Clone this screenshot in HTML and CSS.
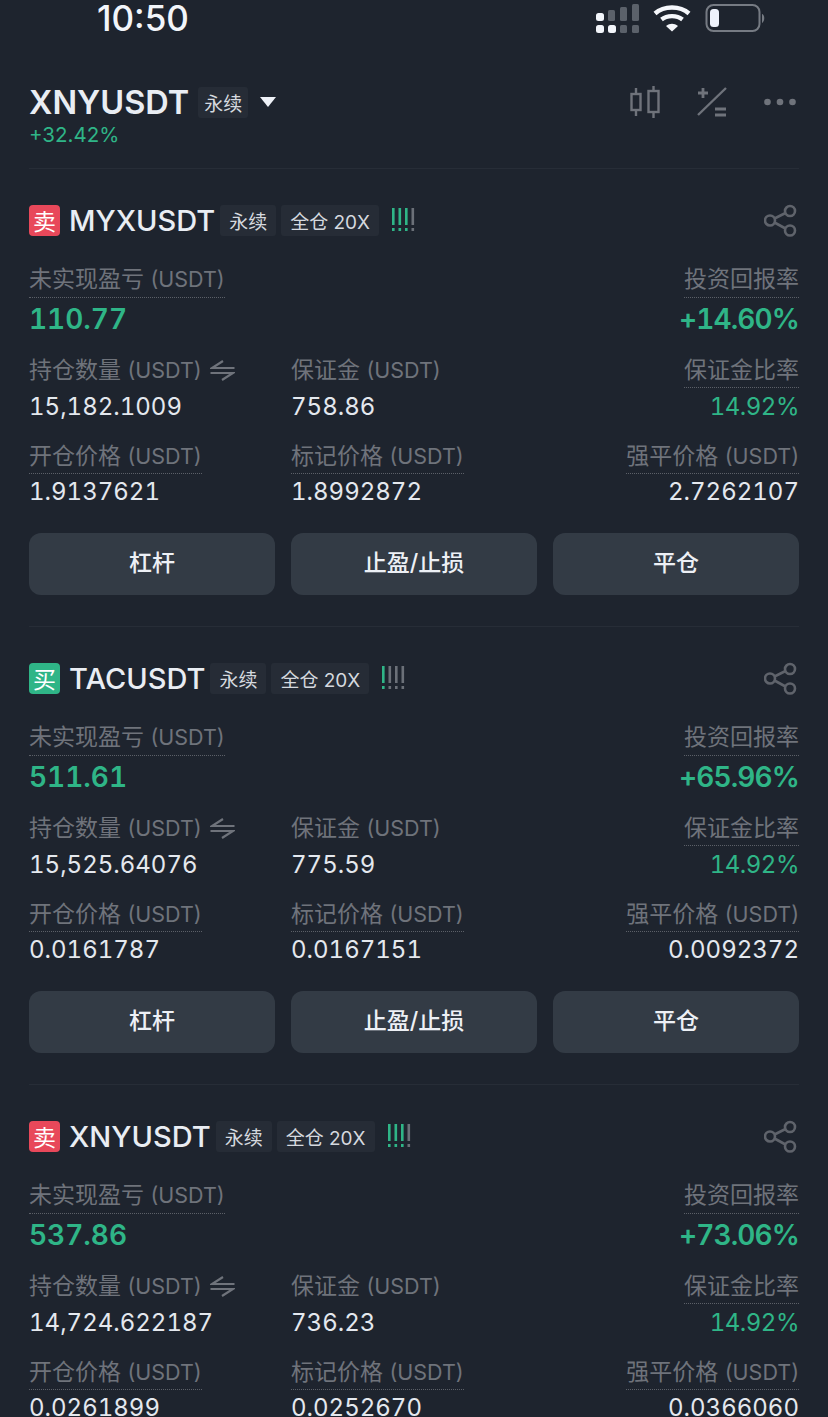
FILE: index.html
```html
<!DOCTYPE html>
<html lang="zh-CN">
<head>
    <meta charset="UTF-8">
    <meta name="viewport" content="width=device-width, initial-scale=1.0">
    <title>XNYUSDT</title>
    <link rel="stylesheet" href="styles.css">
</head>
<body>
    <div class="statusbar">
        <span class="time">10:50</span>
        <div class="status-icons">
            <svg class="signal" width="43" height="32" viewBox="0 0 43 32">
                <rect x="0" y="11" width="8" height="8" rx="2.500" fill="#f2f5fa"/>
                <rect x="12" y="8" width="7" height="11" rx="1.500" fill="#5b616a"/>
                <rect x="24" y="5" width="7" height="14" rx="1.500" fill="#5b616a"/>
                <rect x="36" y="2" width="7" height="17" rx="1.500" fill="#5b616a"/>
                <rect x="0" y="23" width="8" height="8" rx="2.500" fill="#f2f5fa"/>
                <rect x="12" y="23" width="8" height="8" rx="2.500" fill="#f2f5fa"/>
                <rect x="24" y="23" width="7" height="8" rx="1.500" fill="#5b616a"/>
                <rect x="36" y="23" width="7" height="8" rx="1.500" fill="#5b616a"/>
            </svg>
            <svg class="wifi" width="38" height="28" viewBox="0 0 38 28">
                <path d="M2 9.500 C11 1.500 27 1.500 36 9.500" fill="none" stroke="#f5f7fb" stroke-width="4.400"/>
                <path d="M8.500 15.500 C14 11 24 11 29.500 15.500" fill="none" stroke="#f5f7fb" stroke-width="4.200"/>
                <path d="M13 22 L19 27.500 L25 22 C21 19 17 19 13 22 Z" fill="#f5f7fb"/>
            </svg>
            <svg class="battery" width="62" height="30" viewBox="0 0 62 30">
                <rect x="1.500" y="2" width="53" height="26" rx="7" fill="none" stroke="#767b83" stroke-width="2"/>
                <rect x="5" y="6" width="9" height="18" rx="3.500" fill="#eef2fb"/>
                <path d="M57 11 C60 12 60 18 57 20 Z" fill="#767b83"/>
            </svg>
        </div>
    </div>

    <header class="top">
        <div class="top-left">
            <div class="top-title">
                <h1>XNYUSDT</h1>
                <span class="tag">永续</span>
                <svg class="caret" width="18" height="12" viewBox="0 0 18 12"><path d="M1 1 H17 L9 11 Z" fill="#eef1f7"/></svg>
            </div>
            <div class="top-change">+32.42%</div>
        </div>
        <div class="top-icons">
            <svg width="30" height="32" viewBox="0 0 30 32" fill="none" stroke="#6f737b" stroke-width="2.400">
                <rect x="1.500" y="8" width="9" height="16"/>
                <path d="M6 2 V8 M6 24 V30"/>
                <rect x="18.500" y="5" width="10" height="21"/>
                <path d="M23.500 0 V5 M23.500 26 V32"/>
            </svg>
            <svg width="30" height="30" viewBox="0 0 30 30" fill="none" stroke="#6f737b" stroke-width="2.400">
                <path d="M1 28 L29 1"/>
                <path d="M1 6 H11 M6 1 V11" stroke-width="2.800"/>
                <path d="M18 22 H29 M18 28 H29" stroke-width="2.800"/>
            </svg>
            <svg width="32" height="8" viewBox="0 0 32 8" fill="#6f737b">
                <circle cx="3.500" cy="4" r="3.300"/><circle cx="16" cy="4" r="3.300"/><circle cx="28.500" cy="4" r="3.300"/>
            </svg>
        </div>
    </header>

    <main class="positions">
        <section class="position">
            <div class="pos-head">
                <span class="side sell">卖</span>
                <h2>MYXUSDT</h2>
                <span class="tag">永续</span>
                <span class="tag">全仓 20X</span>
                <svg class="bars" width="24" height="24" viewBox="0 0 24 24"><use href="#ticks3"/></svg>
                <svg class="share" width="33" height="33" viewBox="0 0 33 33"><use href="#share"/></svg>
            </div>
            <div class="row row-main">
                <div class="cell">
                    <span class="label dotted">未实现盈亏 <span class="unit">(USDT)</span></span>
                    <span class="value big up">110.77</span>
                </div>
                <div class="cell cell-end">
                    <span class="label dotted">投资回报率</span>
                    <span class="value big up">+14.60%</span>
                </div>
            </div>
            <div class="row row-mid">
                <div class="cell">
                    <span class="label">持仓数量 <span class="unit">(USDT)</span><svg class="swap" width="25" height="21" viewBox="0 0 25 21"><use href="#swap"/></svg></span>
                    <span class="value">15,182.1009</span>
                </div>
                <div class="cell">
                    <span class="label">保证金 <span class="unit">(USDT)</span></span>
                    <span class="value">758.86</span>
                </div>
                <div class="cell cell-end">
                    <span class="label dotted">保证金比率</span>
                    <span class="value up">14.92%</span>
                </div>
            </div>
            <div class="row row-low">
                <div class="cell">
                    <span class="label dotted">开仓价格 <span class="unit">(USDT)</span></span>
                    <span class="value">1.9137621</span>
                </div>
                <div class="cell">
                    <span class="label dotted">标记价格 <span class="unit">(USDT)</span></span>
                    <span class="value">1.8992872</span>
                </div>
                <div class="cell cell-end">
                    <span class="label dotted">强平价格 <span class="unit">(USDT)</span></span>
                    <span class="value">2.7262107</span>
                </div>
            </div>
            <div class="actions">
                <button>杠杆</button>
                <button>止盈/止损</button>
                <button>平仓</button>
            </div>
        </section>

        <section class="position">
            <div class="pos-head">
                <span class="side buy">买</span>
                <h2>TACUSDT</h2>
                <span class="tag">永续</span>
                <span class="tag">全仓 20X</span>
                <svg class="bars" width="24" height="24" viewBox="0 0 24 24"><use href="#ticks1"/></svg>
                <svg class="share" width="33" height="33" viewBox="0 0 33 33"><use href="#share"/></svg>
            </div>
            <div class="row row-main">
                <div class="cell">
                    <span class="label dotted">未实现盈亏 <span class="unit">(USDT)</span></span>
                    <span class="value big up">511.61</span>
                </div>
                <div class="cell cell-end">
                    <span class="label dotted">投资回报率</span>
                    <span class="value big up">+65.96%</span>
                </div>
            </div>
            <div class="row row-mid">
                <div class="cell">
                    <span class="label">持仓数量 <span class="unit">(USDT)</span><svg class="swap" width="25" height="21" viewBox="0 0 25 21"><use href="#swap"/></svg></span>
                    <span class="value">15,525.64076</span>
                </div>
                <div class="cell">
                    <span class="label">保证金 <span class="unit">(USDT)</span></span>
                    <span class="value">775.59</span>
                </div>
                <div class="cell cell-end">
                    <span class="label dotted">保证金比率</span>
                    <span class="value up">14.92%</span>
                </div>
            </div>
            <div class="row row-low">
                <div class="cell">
                    <span class="label dotted">开仓价格 <span class="unit">(USDT)</span></span>
                    <span class="value">0.0161787</span>
                </div>
                <div class="cell">
                    <span class="label dotted">标记价格 <span class="unit">(USDT)</span></span>
                    <span class="value">0.0167151</span>
                </div>
                <div class="cell cell-end">
                    <span class="label dotted">强平价格 <span class="unit">(USDT)</span></span>
                    <span class="value">0.0092372</span>
                </div>
            </div>
            <div class="actions">
                <button>杠杆</button>
                <button>止盈/止损</button>
                <button>平仓</button>
            </div>
        </section>

        <section class="position">
            <div class="pos-head">
                <span class="side sell">卖</span>
                <h2>XNYUSDT</h2>
                <span class="tag">永续</span>
                <span class="tag">全仓 20X</span>
                <svg class="bars" width="24" height="24" viewBox="0 0 24 24"><use href="#ticks3"/></svg>
                <svg class="share" width="33" height="33" viewBox="0 0 33 33"><use href="#share"/></svg>
            </div>
            <div class="row row-main">
                <div class="cell">
                    <span class="label dotted">未实现盈亏 <span class="unit">(USDT)</span></span>
                    <span class="value big up">537.86</span>
                </div>
                <div class="cell cell-end">
                    <span class="label dotted">投资回报率</span>
                    <span class="value big up">+73.06%</span>
                </div>
            </div>
            <div class="row row-mid">
                <div class="cell">
                    <span class="label">持仓数量 <span class="unit">(USDT)</span><svg class="swap" width="25" height="21" viewBox="0 0 25 21"><use href="#swap"/></svg></span>
                    <span class="value">14,724.622187</span>
                </div>
                <div class="cell">
                    <span class="label">保证金 <span class="unit">(USDT)</span></span>
                    <span class="value">736.23</span>
                </div>
                <div class="cell cell-end">
                    <span class="label dotted">保证金比率</span>
                    <span class="value up">14.92%</span>
                </div>
            </div>
            <div class="row row-low">
                <div class="cell">
                    <span class="label dotted">开仓价格 <span class="unit">(USDT)</span></span>
                    <span class="value">0.0261899</span>
                </div>
                <div class="cell">
                    <span class="label dotted">标记价格 <span class="unit">(USDT)</span></span>
                    <span class="value">0.0252670</span>
                </div>
                <div class="cell cell-end">
                    <span class="label dotted">强平价格 <span class="unit">(USDT)</span></span>
                    <span class="value">0.0366060</span>
                </div>
            </div>
        </section>
    </main>

    <!-- shared icons -->
    <svg class="defs" width="0" height="0">
        <defs>
            <g id="tick">
                <rect x="0" y="0" width="2.600" height="17"/>
                <rect x="0" y="20" width="2.600" height="3"/>
            </g>
            <g id="ticks3">
                <use href="#tick" x="1" fill="#2fb587"/>
                <use href="#tick" x="7.500" fill="#2fb587"/>
                <use href="#tick" x="14" fill="#2fb587"/>
                <use href="#tick" x="20.500" fill="#6b7078"/>
            </g>
            <g id="ticks1">
                <use href="#tick" x="1" fill="#2fb587"/>
                <use href="#tick" x="7.500" fill="#6b7078"/>
                <use href="#tick" x="14" fill="#6b7078"/>
                <use href="#tick" x="20.500" fill="#6b7078"/>
            </g>
            <g id="share" fill="none" stroke="#5f636b" stroke-width="2.600">
                <circle cx="26" cy="7" r="5"/>
                <circle cx="6" cy="16.500" r="5"/>
                <circle cx="26" cy="26.500" r="5"/>
                <path d="M10.500 14.500 L21.500 9 M10.500 18.500 L21.500 24.500"/>
            </g>
            <g id="swap" fill="none" stroke="#6f737b" stroke-width="2.200">
                <path d="M24.500 8 H2 L13 1"/>
                <path d="M0.500 13 H23 L12 20"/>
            </g>
        </defs>
    </svg>
</body>
</html>
```

FILE: styles.css
```css
* {
    box-sizing: border-box;
}
html, body {
    height: 100%;
}
body {
    margin: 0;
    padding: 0;
    background: #1e242e;
    color: #e9edf3;
    font-family: Inter, "Noto Sans CJK SC", sans-serif;
    overflow: hidden;
}
h1, h2 {
    margin: 0;
    font-weight: 600;
}
.defs {
    display: block;
}

/* status bar */
.statusbar {
    height: 35px;
    padding: 0 61px 0 97px;
    display: flex;
    justify-content: space-between;
    align-items: center;
}
.time {
    font-size: 35px;
    font-weight: 500;
    color: #f2f5fa;
}
.status-icons {
    display: flex;
    align-items: center;
    gap: 14px;
}

/* top bar */
.top {
    margin: 48px 29px 0;
    height: 86px;
    border-bottom: 1px solid #272d37;
    display: flex;
    justify-content: space-between;
}
.top-title {
    display: flex;
    align-items: center;
    height: 38px;
}
.top-title h1 {
    font-size: 32.500px;
}
.top-title .tag {
    margin-left: 9px;
    height: 31px;
    padding: 0 6px;
}
.caret {
    margin-left: 11px;
}
.top-change {
    font-size: 20.500px;
    color: #2fb587;
    line-height: 28px;
}
.top-icons {
    width: 169px;
    height: 38px;
    padding-right: 3px;
    display: flex;
    justify-content: space-between;
    align-items: center;
}

/* tags */
.tag {
    height: 31px;
    padding: 0 9px;
    background: #262c36;
    border-radius: 3px;
    font-size: 19px;
    color: #d5d9df;
    display: inline-flex;
    align-items: center;
}

/* position card */
.position {
    margin: 0 29px;
    height: 458px;
    padding-top: 34px;
    border-bottom: 1px solid #272d37;
}
.position:last-child {
    height: auto;
    border-bottom: 0;
}
.pos-head {
    height: 34px;
    display: flex;
    align-items: center;
}
.pos-head h2 {
    margin-left: 9px;
    font-size: 29px;
    font-weight: 500;
}
.pos-head .tag {
    margin-left: 5px;
}
.bars {
    margin-left: 12px;
}
.share {
    margin-left: auto;
    margin-right: 2px;
}
.side {
    width: 31px;
    height: 31px;
    border-radius: 4px;
    font-size: 23px;
    color: #fff;
    display: flex;
    justify-content: center;
    align-items: center;
}
.sell {
    background: #e8485a;
}
.buy {
    background: #2fb587;
}

/* data rows */
.row {
    display: flex;
}
.row-main {
    margin-top: 24px;
    justify-content: space-between;
}
.row-main .label {
    height: 37px;
}
.row-mid {
    margin-top: 11px;
}
.row-mid .value {
    margin-top: 1px;
}
.row-low {
    margin-top: 13px;
}
.cell {
    width: 262px;
    display: flex;
    flex-direction: column;
    align-items: flex-start;
}
.cell-end {
    margin-left: auto;
    width: auto;
    align-items: flex-end;
}
.label {
    font-size: 23px;
    line-height: 36px;
    height: 36px;
    color: #6f737b;
    display: flex;
    align-items: center;
    white-space: pre;
}
.unit {
    font-size: 21.500px;
}
.dotted {
    border-bottom: 1px dotted #5c6068;
}
.swap {
    margin-left: 8px;
}
.value {
    font-size: 24px;
    line-height: 36px;
    color: #e4e8ee;
    font-variant-numeric: tabular-nums;
}
.big {
    font-size: 28px;
    font-weight: 600;
    line-height: 43px;
}
.up {
    color: #2fb587;
}
.cell-end .up {
    letter-spacing: -0.500px;
}
.cell-end .big {
    letter-spacing: -0.900px;
}

/* buttons */
.actions {
    margin-top: 23px;
    display: flex;
    gap: 16px;
}
.actions button {
    flex: 1;
    height: 62px;
    padding: 0 0 6px;
    border: 0;
    border-radius: 12px;
    background: #333b45;
    color: #edf0f5;
    font-family: inherit;
    font-size: 23px;
    font-weight: 500;
}
```
